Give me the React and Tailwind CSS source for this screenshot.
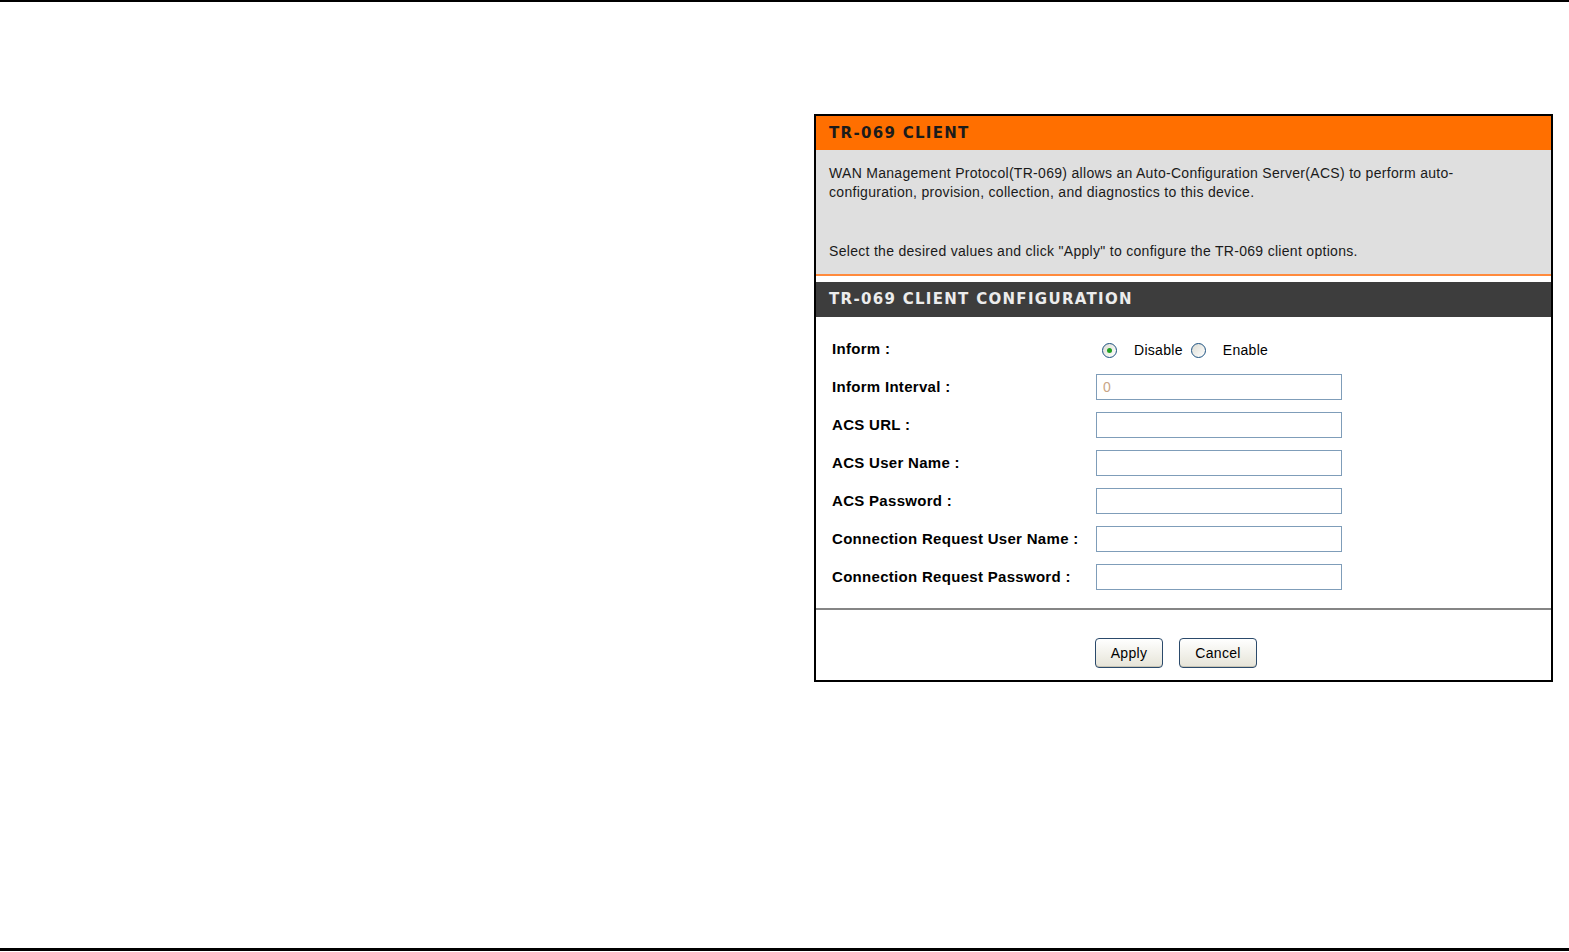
import React, { useState } from 'react';

const fields = [
  { label: 'Inform Interval :', value: '0', disabled: true },
  { label: 'ACS URL :' },
  { label: 'ACS User Name :' },
  { label: 'ACS Password :' },
  { label: 'Connection Request User Name :' },
  { label: 'Connection Request Password :' },
];

const Radio = ({ checked, onClick }) => (
  <span
    onClick={onClick}
    className="inline-flex items-center justify-center w-[15px] h-[15px] rounded-full border border-[#1c5180] bg-gradient-to-br from-[#dcdcd4] to-white cursor-pointer"
  >
    {checked && <span className="w-[5px] h-[5px] rounded-full bg-[#21a121]" />}
  </span>
);

const XpButton = ({ children, w }) => (
  <button
    className={`${w} h-[30px] rounded-[4px] border border-[#2b4a6b] bg-gradient-to-b from-white to-[#e6e4d8] text-[14px] tracking-[0.3px] text-black shadow-[inset_0_-1px_0_#c8c4b4]`}
  >
    {children}
  </button>
);

export default function App() {
  const [inform, setInform] = useState('disable');

  return (
    <div className="h-[952px] flex flex-col bg-white font-['Liberation_Sans',Arial,sans-serif] text-black">
      <div className="h-[2px] bg-black" />
      <div className="flex-1 pl-[814px] pt-[112px]">
        <div className="w-[739px] border-2 border-black">
          {/* TR-069 client intro */}
          <div className="h-[34px] bg-[#ff6f00] pl-[13px] flex items-center">
            <h2 className="font-['DejaVu_Sans',Verdana,sans-serif] font-bold text-[15px] tracking-[1.3px] text-[#1b1b1b]">
              TR-069 CLIENT
            </h2>
          </div>
          <div className="h-[126px] bg-[#dfdfdf] pl-[13px] pt-[14px] text-[14px] leading-[19px] tracking-[0.3px] text-[#1a1a1a] border-b-2 border-[#ff8a3c]">
            <p>
              WAN Management Protocol(TR-069) allows an Auto-Configuration Server(ACS) to perform auto-
              <br />
              configuration, provision, collection, and diagnostics to this device.
            </p>
            <p className="mt-[40px]">
              Select the desired values and click "Apply" to configure the TR-069 client options.
            </p>
          </div>

          {/* Configuration */}
          <div className="mt-[6px] h-[35px] bg-[#3d3d3d] pl-[13px] flex items-center">
            <h2 className="font-['DejaVu_Sans',Verdana,sans-serif] font-bold text-[15px] tracking-[1.3px] text-[#ececec]">
              TR-069 CLIENT CONFIGURATION
            </h2>
          </div>
          <div className="pt-[13px] pb-[12px] pl-[16px]">
            <div className="grid grid-cols-[264px_1fr] auto-rows-[38px] items-center">
              <span className="font-bold text-[15px] tracking-[0.3px]">Inform :</span>
              <div className="flex items-center text-[14px] tracking-[0.3px] pl-[6px] pt-[2px]">
                <Radio checked={inform === 'disable'} onClick={() => setInform('disable')} />
                <span className="ml-[17px]">Disable</span>
                <span className="ml-[8px] inline-flex">
                  <Radio checked={inform === 'enable'} onClick={() => setInform('enable')} />
                </span>
                <span className="ml-[17px]">Enable</span>
              </div>
              {fields.map((f) => (
                <React.Fragment key={f.label}>
                  <span className="font-bold text-[15px] tracking-[0.3px]">{f.label}</span>
                  <input
                    type="text"
                    defaultValue={f.value || ''}
                    disabled={f.disabled}
                    className="w-[246px] h-[26px] border border-[#7f9db9] bg-white px-[6px] text-[14px] text-[#c9a586] outline-none"
                  />
                </React.Fragment>
              ))}
            </div>
          </div>
          <div className="h-[2px] bg-[#858585]" />
          <div className="h-[70px] flex items-start pt-[28px] pl-[279px] gap-[16px]">
            <XpButton w="w-[68px]">Apply</XpButton>
            <XpButton w="w-[78px]">Cancel</XpButton>
          </div>
        </div>
      </div>
      <div className="h-[3px] bg-black mb-[1px]" />
    </div>
  );
}
